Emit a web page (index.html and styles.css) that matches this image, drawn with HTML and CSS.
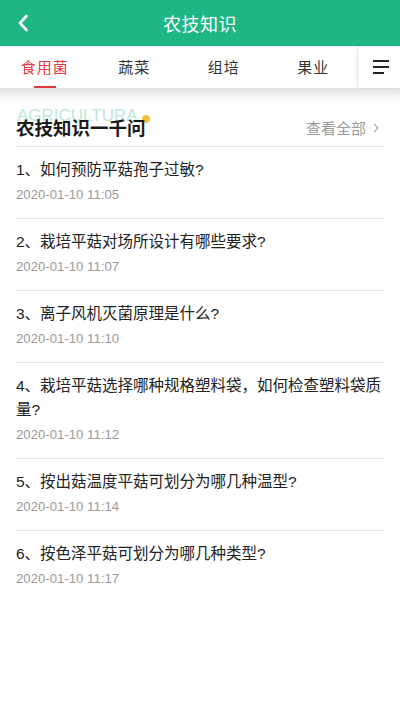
FILE: index.html
```html
<!DOCTYPE html>
<html lang="zh">
<head>
<meta charset="utf-8">
<link rel="stylesheet" href="styles.css">
</head>
<body>
<div class="app">
  <header class="topbar">
    <svg class="back" width="12" height="18" viewBox="0 0 12 18"><path d="M9.5 2 L3 9 L9.5 16" fill="none" stroke="#fff" stroke-width="2.6" stroke-linecap="round" stroke-linejoin="round"/></svg>
    <h1 class="title">农技知识</h1>
  </header>
  <nav class="tabs">
    <div class="tab-list">
      <div class="tab active">食用菌<span class="bar"></span></div>
      <div class="tab">蔬菜</div>
      <div class="tab">组培</div>
      <div class="tab">果业</div>
    </div>
    <div class="menu">
      <svg width="18" height="16" viewBox="0 0 18 16"><rect x="1" y="1" width="16" height="2" fill="#222"/><rect x="1" y="7" width="16" height="2" fill="#222"/><rect x="1" y="13" width="11" height="2" fill="#222"/></svg>
    </div>
  </nav>
  <div class="shade"></div>
  <main class="content">
    <div class="sec-head">
      <span class="deco">AGRICULTURA</span>
      <span class="dot"></span>
      <h2 class="sec-title">农技知识一千问</h2>
      <span class="more">查看全部<svg width="8" height="12" viewBox="0 0 8 12"><path d="M2 2 L6 6 L2 10" fill="none" stroke="#aaa" stroke-width="1.2"/></svg></span>
    </div>
    <ul class="list">
      <li class="item"><p class="q">1、如何预防平菇孢子过敏?</p><p class="date">2020-01-10 11:05</p></li>
      <li class="item"><p class="q">2、栽培平菇对场所设计有哪些要求?</p><p class="date">2020-01-10 11:07</p></li>
      <li class="item"><p class="q">3、离子风机灭菌原理是什么?</p><p class="date">2020-01-10 11:10</p></li>
      <li class="item"><p class="q">4、栽培平菇选择哪种规格塑料袋，如何检查塑料袋质量?</p><p class="date">2020-01-10 11:12</p></li>
      <li class="item"><p class="q">5、按出菇温度平菇可划分为哪几种温型?</p><p class="date">2020-01-10 11:14</p></li>
      <li class="item last"><p class="q">6、按色泽平菇可划分为哪几种类型?</p><p class="date">2020-01-10 11:17</p></li>
    </ul>
  </main>
</div>
</body>
</html>
```
FILE: styles.css
```css
* { box-sizing: border-box; margin: 0; padding: 0; }
html, body { background: #fff; }
body {
  width: 400px;
  height: 710px;
  overflow: hidden;
  font-family: "Liberation Sans", "Noto Sans CJK SC", sans-serif;
  color: #222;
}
.app { width: 400px; }
.topbar {
  height: 46px;
  background: #1eb685;
  display: flex;
  align-items: center;
  justify-content: center;
  position: relative;
}
.back { position: absolute; left: 17px; top: 14px; }
.title {
  font-size: 18px;
  font-weight: normal;
  color: #fff;
  font-family: "Noto Sans CJK SC", sans-serif;
  letter-spacing: 0.5px;
}
.tabs {
  height: 42px;
  display: flex;
  background: #fff;
}
.tab-list {
  flex: 1;
  display: grid;
  grid-template-columns: repeat(4, 1fr);
}
.tab {
  position: relative;
  display: flex;
  align-items: center;
  justify-content: center;
  font-size: 15px;
  letter-spacing: 1px;
  color: #333;
  font-family: "Noto Sans CJK SC", sans-serif;
  padding-bottom: 1px;
}
.tab.active { color: #e23a3f; }
.bar {
  position: absolute;
  bottom: 0;
  left: 50%;
  margin-left: -11px;
  width: 22px;
  height: 2px;
  background: #e23a3f;
}
.menu {
  width: 42px;
  display: flex;
  align-items: center;
  justify-content: center;
  box-shadow: -2px 0 3px rgba(0,0,0,0.08);
  border-left: 1px solid #efefef;
  padding-left: 2px;
}
.shade {
  height: 16px;
  background: linear-gradient(#e2e2e2, #f6f6f6 60%, #fff);
}
.content { padding: 0 16px; }
.sec-head {
  position: relative;
  display: flex;
  align-items: center;
  justify-content: space-between;
  padding: 10px 0 6px;
  border-bottom: 1px solid #e3e3e3;
}
.deco {
  position: absolute;
  left: 1px;
  top: 2px;
  font-size: 17px;
  color: #bde8d2;
  font-family: "Liberation Sans", sans-serif;
}
.dot {
  position: absolute;
  left: 126px;
  top: 11px;
  width: 8px;
  height: 8px;
  border-radius: 50%;
  background: #f3c13d;
}
.sec-title {
  position: relative;
  font-size: 18.5px;
  line-height: 26px;
  font-weight: bold;
  color: #1a1a1a;
  font-family: "Noto Sans CJK SC", sans-serif;
}
.more {
  display: flex;
  align-items: center;
  gap: 6px;
  font-size: 15px;
  color: #999;
  font-family: "Noto Sans CJK SC", sans-serif;
  margin-right: 4px;
  padding-top: 1px;
}
.list { list-style: none; }
.item {
  padding: 11px 0 13px;
  border-bottom: 1px solid #e3e3e3;
}
.item.last { border-bottom: none; }
.q {
  font-size: 15.5px;
  line-height: 24px;
  color: #222;
}
.date {
  margin-top: 3px;
  font-size: 13.2px;
  line-height: 20px;
  color: #9a9a9a;
}
```
